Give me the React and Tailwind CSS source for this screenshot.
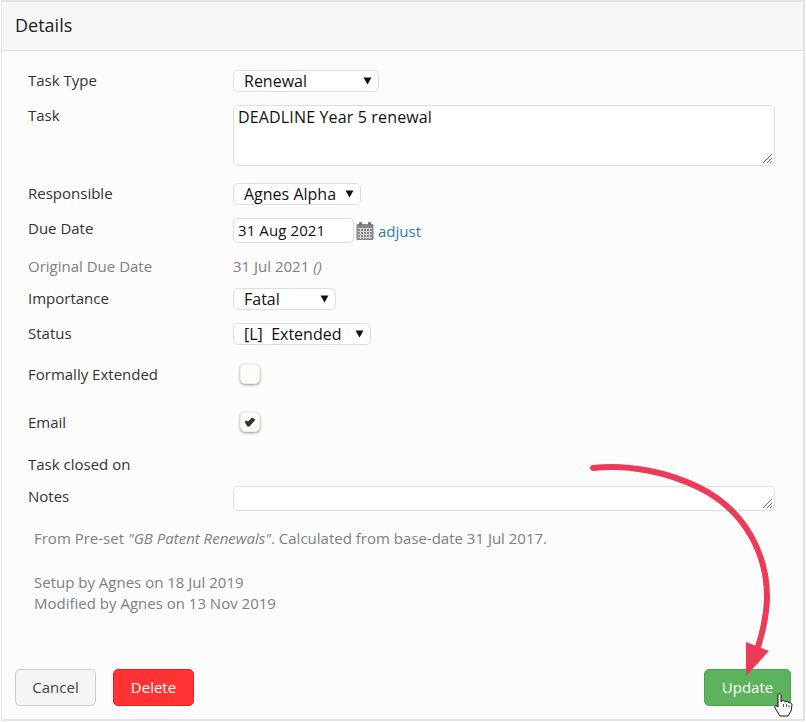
import React from 'react';

const Select = ({ value, width, arrow }) => (
  <div className={`relative h-[22px] ${width} bg-white border border-[#dedede] rounded-[5px]`}>
    <span className="absolute left-[10px] top-[0px] text-[16px] leading-[20px] text-[#111] whitespace-nowrap">{value}</span>
    <svg className={`absolute top-[6px] ${arrow}`} width="9" height="8" viewBox="0 0 9 8">
      <path d="M0.5 0.5H8.5L4.5 7.5Z" fill="#111" />
    </svg>
  </div>
);

const Row = ({ label, labelClass = 'text-[#333]', className = '', children }) => (
  <div className={`flex ${className}`}>
    <div className={`w-[205px] shrink-0 ${labelClass}`}>{label}</div>
    <div className="flex-1">{children}</div>
  </div>
);

const ResizeGrip = () => (
  <svg className="absolute right-[1px] bottom-[1px]" width="11" height="11" viewBox="0 0 11 11">
    <path d="M10 1L1 10M10 5L5 10M10 8L8 10" stroke="#666" strokeWidth="1" />
  </svg>
);

const CalendarIcon = () => (
  <svg width="18" height="18" viewBox="0 0 18 18" className="shrink-0">
    <rect x="0.5" y="2" width="17" height="16" rx="1" fill="#888" />
    <rect x="3" y="0" width="3" height="4" rx="1" fill="#777" />
    <rect x="12" y="0" width="3" height="4" rx="1" fill="#777" />
    <path d="M2 6.5H16M2 9.5H16M2 12.5H16M2 15.5H16M4.5 6V17M7.5 6V17M10.5 6V17M13.5 6V17" stroke="#d4d4d4" strokeWidth="1" />
  </svg>
);

const Checkbox = ({ checked }) => (
  <div className="w-[20px] h-[20px] ml-[7px] bg-[#fdfdf8] rounded-[5px] border border-[#eeeeee] shadow-[0_1px_3px_rgba(0,0,0,0.4)] flex items-center justify-center">
    {checked && (
      <svg width="12" height="10" viewBox="0 0 12 10">
        <path d="M0.5 5L2.5 3.5L4 4.5L8 0.5L11.5 2.5L5.5 9.5H3.5Z" fill="#333" />
      </svg>
    )}
  </div>
);

const App = () => {
  return (
    <div className="relative w-[806px] h-[722px] bg-white font-['Open_Sans',sans-serif] text-[15px] overflow-hidden">
      <div className="w-[804px] h-[721px] ml-[1px] border-2 border-[#e3e3e3] border-l-[1px] border-r-[2px] bg-[#fcfcfd] flex flex-col">
        <div className="h-[49px] shrink-0 bg-[#f7f7f7] border-b border-[#e0e0e0] pl-[13px] pt-[11px] text-[18px] leading-[24px] text-[#222]">
          Details
        </div>

        <div className="flex-1 pl-[26px] pr-[28px] pt-[19px] leading-[20px]">
          <Row label="Task Type" className="h-[22px]">
            <Select value="Renewal" width="w-[146px]" arrow="left-[129px]" />
          </Row>
          <Row label="Task" className="mt-[13px] h-[61px]">
            <div className="relative h-[61px] bg-white border border-[#dedede] rounded-[5px] pl-[4px] pt-[1px] text-[16px] leading-[20px] tracking-[0.15px] text-[#111]">
              DEADLINE Year 5 renewal
              <ResizeGrip />
            </div>
          </Row>
          <Row label="Responsible" className="mt-[17px] h-[22px]">
            <Select value="Agnes Alpha" width="w-[128px]" arrow="left-[111px]" />
          </Row>
          <Row label="Due Date" className="mt-[13px] h-[25px]">
            <div className="flex items-center">
              <div className="w-[121px] h-[25px] bg-white border border-[#dedede] rounded-[5px] pl-[4px] text-[15px] leading-[23px] tracking-[0.1px] text-[#111]">
                31 Aug 2021
              </div>
              <div className="ml-[2px] mt-[1px]"><CalendarIcon /></div>
              <a className="ml-[4px] mt-[1px] text-[15px] text-[#2f7ea6]">adjust</a>
            </div>
          </Row>
          <Row label="Original Due Date" labelClass="text-[#7f7f7f]" className="mt-[13px] h-[20px]">
            <span className="text-[#7f7f7f]">31 Jul 2021 <i>()</i></span>
          </Row>
          <Row label="Importance" className="mt-[12px] h-[22px]">
            <Select value="Fatal" width="w-[103px]" arrow="left-[86px]" />
          </Row>
          <Row label="Status" className="mt-[13px] h-[22px]">
            <Select value={'[L]\u00a0\u00a0Extended'} width="w-[138px]" arrow="left-[121px]" />
          </Row>
          <Row label="Formally Extended" className="mt-[19px] h-[20px]">
            <Checkbox />
          </Row>
          <Row label="Email" className="mt-[28px] h-[20px]">
            <Checkbox checked />
          </Row>
          <Row label="Task closed on" className="mt-[22px] h-[20px]" />
          <Row label="Notes" className="mt-[12px] h-[25px]">
            <div className="relative h-[25px] bg-white border border-[#dedede] rounded-[5px]">
              <ResizeGrip />
            </div>
          </Row>
          <div className="mt-[17px] ml-[6px] text-[#7f7f7f]">
            From Pre-set <i>"GB Patent Renewals"</i>. Calculated from base-date 31 Jul 2017.
          </div>
          <div className="mt-[24px] ml-[6px] text-[#7f7f7f] leading-[21px]">
            <div>Setup by Agnes on 18 Jul 2019</div>
            <div>Modified by Agnes on 13 Nov 2019</div>
          </div>
        </div>

        <div className="flex items-center h-[37px] mb-[13px] pl-[13px] pr-[12px] text-[15px]">
          <button className="w-[81px] h-[37px] bg-[#f4f4f4] border border-[#cccccc] rounded-[5px] text-[#444]">Cancel</button>
          <button className="ml-[17px] w-[81px] h-[37px] bg-[#ff3333] border border-[#e62020] rounded-[5px] text-white">Delete</button>
          <button className="ml-auto w-[87px] h-[37px] bg-[#5cb25d] border border-[#4fa350] rounded-[5px] text-white">Update</button>
        </div>
      </div>

      {/* annotation arrow + hand cursor sit on top of the form */}
      <svg className="absolute left-0 top-0 pointer-events-none" width="806" height="722" viewBox="0 0 806 722">
        <path d="M593 468C628 464 668 472 700 488C746 511 768 556 767 600C766 620 762 635 757 650" fill="none" stroke="#ec3a58" strokeWidth="6" strokeLinecap="round" />
        <path d="M746 642L769 651L746 676Z" fill="#ec3a58" />
        <path d="M778 695C778 693 781 693 781 695L781 702C782 700 785 700 785 702C786 701 789 701 789 703C790 702 792 703 792 705L791 711L788 716H780L775 708C774 706 776 705 778 707Z" fill="#fff" stroke="#111" strokeWidth="1" strokeLinejoin="round" />
        <path d="M783.5 704V707M786.5 704V707M789 705V707" stroke="#111" strokeWidth="0.7" />
      </svg>
    </div>
  );
};

export default App;
